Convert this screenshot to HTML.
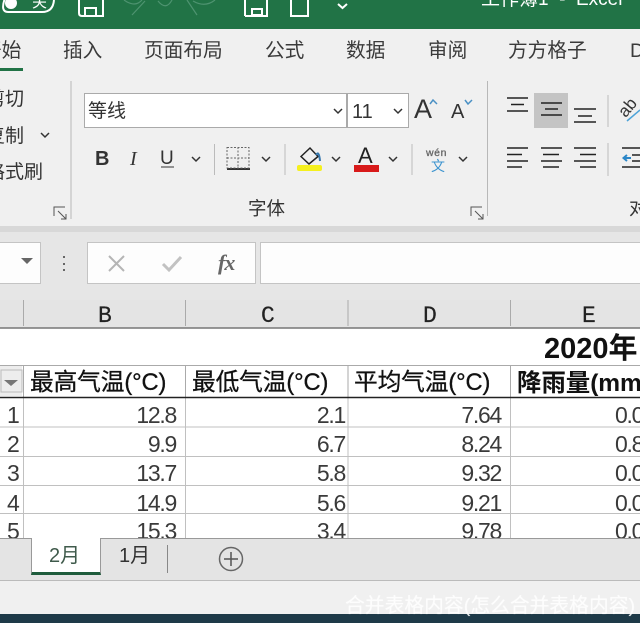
<!DOCTYPE html>
<html lang="zh"><head><meta charset="utf-8"><title>Excel</title>
<style>
html,body{margin:0;padding:0;background:#f0f0f0}
#p{position:relative;width:640px;height:623px;overflow:hidden;background:#f0f0f0;font-family:"Liberation Sans","Noto Sans CJK SC",sans-serif;color:#333;filter:blur(.3px)}
.r{position:absolute}
.t{position:absolute;white-space:nowrap;line-height:1}
.tab{font-size:19.7px;color:#3a3a3a;top:42px}
.c{font-size:23px;color:#3a3a3a;letter-spacing:-1.3px;text-align:right;width:120px}
.e{font-size:23px;color:#3a3a3a;letter-spacing:-1.3px;left:615px}
.h{font-size:23.7px;color:#111;top:372px;letter-spacing:-.1px;-webkit-text-stroke:.3px #111}
.col{font-family:"Liberation Mono","Liberation Serif",monospace;font-size:23px;color:#222;top:305px;-webkit-text-stroke:.2px #222}
.n{font-size:23px;color:#3a3a3a;left:7px}
svg{position:absolute;left:0;top:0}
</style></head><body><div id="p">
<div class="r" style="left:0;top:0;width:640px;height:29px;background:#217346"></div>
<div class="r" style="left:0;top:226px;width:640px;height:6px;background:#d8d8d8"></div>
<div class="r" style="left:0;top:232px;width:640px;height:68px;background:#e6e6e6"></div>
<div class="r" style="left:0;top:300px;width:640px;height:28px;background:#e4e4e4"></div>
<div class="r" style="left:0;top:328px;width:640px;height:210px;background:#fff"></div>
<div class="r" style="left:0;top:581px;width:640px;height:33px;background:#f0f0f0"></div>
<div class="r" style="left:0;top:614px;width:640px;height:9px;background:#1e3a48"></div>
<div class="t" style="left:481px;top:-10px;font-size:19px;color:#fff">工作簿1&nbsp; -&nbsp; Excel</div>
<div class="t" style="left:32px;top:-5px;font-size:15px;color:#fff">关</div>
<div class="t tab" style="left:-18px">开始</div><div class="r" style="left:0;top:68px;width:23px;height:3px;background:#217346"></div>
<div class="t tab" style="left:63px">插入</div><div class="t tab" style="left:144px">页面布局</div>
<div class="t tab" style="left:265px">公式</div><div class="t tab" style="left:346px">数据</div>
<div class="t tab" style="left:428px">审阅</div><div class="t tab" style="left:508px">方方格子</div>
<div class="t tab" style="left:630px">D</div>
<div class="t" style="left:-14px;top:90px;font-size:19px">剪切</div>
<div class="t" style="left:-14px;top:127px;font-size:19px">复制</div>
<div class="t" style="left:-14px;top:163px;font-size:19px">格式刷</div>
<div class="r" style="left:84px;top:93px;width:263px;height:35px;background:#fff;border:1px solid #aaa;box-sizing:border-box"></div>
<div class="r" style="left:347px;top:93px;width:62px;height:35px;background:#fff;border:1px solid #aaa;box-sizing:border-box"></div>
<div class="t" style="left:88px;top:102px;font-size:19px">等线</div>
<div class="t" style="left:352px;top:102px;font-size:20px">11</div>
<div class="t" style="left:414px;top:96px;font-size:27px;font-weight:300">A</div>
<div class="t" style="left:451px;top:102px;font-size:20px">A</div>
<div class="t" style="left:95px;top:149px;font-size:20px;font-weight:bold">B</div>
<div class="t" style="left:130px;top:149px;font-size:20px;font-family:'Liberation Serif',serif;font-style:italic">I</div>
<div class="t" style="left:160px;top:149px;font-size:19px">U</div>
<div class="t" style="left:358px;top:145px;font-size:22px;color:#222">A</div>
<div class="t" style="left:426px;top:148px;font-size:10.5px;color:#666;letter-spacing:.6px;-webkit-text-stroke:.3px #666">wén</div>
<div class="t" style="left:431px;top:159px;font-size:14px;color:#3d94cf">文</div>
<div class="t" style="left:248px;top:200px;font-size:18.5px">字体</div>
<div class="t" style="left:629px;top:200px;font-size:18.5px">对齐</div>
<div class="t" style="left:619px;top:98px;font-size:17px;color:#333;transform:rotate(-50deg);transform-origin:10px 10px">ab</div>
<div class="r" style="left:297px;top:165px;width:25px;height:6px;background:#f5f01e;border-radius:2px"></div>
<div class="r" style="left:354px;top:165px;width:25px;height:7px;background:#d81a1a"></div>
<div class="r" style="left:534px;top:93px;width:34px;height:35px;background:#c4c4c4"></div>
<div class="r" style="left:0;top:242px;width:41px;height:42px;background:#fdfdfd;border:1px solid #c4c4c4;border-left:0;box-sizing:border-box"></div>
<div class="r" style="left:87px;top:242px;width:169px;height:42px;background:#fdfdfd;border:1px solid #c4c4c4;box-sizing:border-box"></div>
<div class="r" style="left:260px;top:242px;width:380px;height:42px;background:#fdfdfd;border:1px solid #c4c4c4;border-right:0;box-sizing:border-box"></div>
<div class="t" style="left:218px;top:252px;font-size:22px;font-family:'Liberation Serif',serif;font-style:italic;font-weight:bold;color:#666;letter-spacing:-1px">fx</div>
<div class="t col" style="left:98px">B</div><div class="t col" style="left:261px">C</div><div class="t col" style="left:423px">D</div><div class="t col" style="left:582px">E</div>
<div class="t" style="left:544px;top:335px;font-size:29px;font-weight:bold;color:#111">2020年</div>
<div class="r" style="left:0;top:366px;width:22px;height:30px;background:#ededed"></div>
<div class="t h" style="left:30px">最高气温(°C)</div><div class="t h" style="left:192px">最低气温(°C)</div>
<div class="t h" style="left:354px">平均气温(°C)</div><div class="t h" style="left:517px;font-weight:bold;font-size:24.5px;-webkit-text-stroke:0">降雨量(mm)</div>
<div class="t n" style="top:404px">1</div><div class="t n" style="top:433px">2</div><div class="t n" style="top:462px">3</div><div class="t n" style="top:492px">4</div><div class="t n" style="top:520px">5</div>
<div class="t c" style="left:56px;top:404px">12.8</div><div class="t c" style="left:56px;top:433px">9.9</div><div class="t c" style="left:56px;top:462px">13.7</div><div class="t c" style="left:56px;top:492px">14.9</div><div class="t c" style="left:56px;top:520px">15.3</div>
<div class="t c" style="left:225px;top:404px">2.1</div><div class="t c" style="left:225px;top:433px">6.7</div><div class="t c" style="left:225px;top:462px">5.8</div><div class="t c" style="left:225px;top:492px">5.6</div><div class="t c" style="left:225px;top:520px">3.4</div>
<div class="t c" style="left:381px;top:404px">7.64</div><div class="t c" style="left:381px;top:433px">8.24</div><div class="t c" style="left:381px;top:462px">9.32</div><div class="t c" style="left:381px;top:492px">9.21</div><div class="t c" style="left:381px;top:520px">9.78</div>
<div class="t e" style="top:404px">0.0</div><div class="t e" style="top:433px">0.8</div><div class="t e" style="top:462px">0.0</div><div class="t e" style="top:492px">0.0</div><div class="t e" style="top:520px">0.0</div>
<div class="r" style="left:0;top:538px;width:640px;height:43px;background:#e4e4e4;border-top:1px solid #999;border-bottom:1px solid #bbb;box-sizing:border-box"></div>
<div class="r" style="left:31px;top:538px;width:70px;height:37px;background:#fff;border:1px solid #999;border-top:0;border-bottom:3px solid #1e5c3c;box-sizing:border-box"></div>
<div class="t" style="left:49px;top:546px;font-size:20px;color:#3f5a4b">2月</div>
<div class="t" style="left:119px;top:546px;font-size:20px;color:#333">1月</div>
<svg width="640" height="623" fill="none">
<g stroke="#fff" stroke-width="2">
<path d="M5 -2Q0 12 8 12H42Q53 12 54 0"/><circle cx="11" cy="3" r="6" fill="#fff" stroke="none"/>
<path d="M79 0V13Q79 16 82 16H103V0M85 16V8H96V16"/><path d="M245 16V0M267 0V16H245M252 9H262V15H252Z"/><path d="M291 0V16H308V0"/>
<path d="M338 4L342.500 8L347 4"/></g>
<g stroke="#4e9370" stroke-width="1.200"><path d="M132 15L145 1M124 0Q135 8 142 0M158 1Q166 11 172 0M187 0L197 15M193 1Q205 8 215 0"/></g>
<g stroke="#b8b8b8"><path d="M71 81V219M487.500 81V216"/></g>
<g stroke="#333" stroke-width="1.500"><path d="M334 109L338 113L342 109M394 109L398 113L402 109M41 133L45 137L49 133M192 157L196 161L200 157M262 157L266 161L270 157M332 157L336 161L340 157M389 157L393 161L397 157M459 157L463 161L467 157"/>
<path d="M161 167H174" stroke-width="1"/><path d="M227 169H250" stroke-width="2"/><path d="M227 147.500H249V168H227ZM238 147V168M227 158H249" stroke="#666" stroke-width="1" stroke-dasharray="2 1.500"/>
<path d="M301 156.500L310 148L318 156.500L309 164Z" stroke="#222"/><path d="M316 155Q319 150 320 161" stroke="#3476ad" stroke-width="2"/>
<path d="M507 98H528M511 104.500H524M507 111H528M541 103H562M545 109H558M541 115H562M574 109H596M578 116H592M574 122H596" stroke="#222"/>
<path d="M507 148H528M507 154.500H522M507 161H528M507 167H522M541 148H562M543 154.500H559M541 161H562M543 167H559M574 148H596M580 154.500H596M574 161H596M580 167H596" stroke="#222"/>
<path d="M622 148H640M632 155H640M632 161H640M622 167H640" stroke="#222"/>
</g>
<path d="M623 158H631M627 155L623.500 158L627 161" stroke="#2b87c8" stroke-width="2"/>
<path d="M627 121L640 110" stroke="#4da3d8" stroke-width="1.500"/>
<path d="M430 104L433 100L437 104" stroke="#4a90c4" stroke-width="1.500"/><path d="M465 100L468 104L472 100" stroke="#4a90c4" stroke-width="1.500"/>
<g stroke="#bbb"><path d="M214.500 144V175M285 144V175M412 144V175M608 95V127M608 143V176"/></g>
<g stroke="#555" stroke-width="1"><path d="M54 216V207H65M58 211L66 219M61 219H66V214M471 216V207H482M475 211L483 219M478 219H483V214"/></g>
<path d="M21 258H33L27 264Z" fill="#666"/><path d="M4 380H18L11 386Z" fill="#777"/>
<rect x="1" y="370" width="21" height="22" stroke="#bbb"/>
<g fill="#666"><rect x="63" y="256" width="2" height="2"/><rect x="63" y="263" width="2" height="2"/><rect x="63" y="269" width="2" height="2"/></g>
<path d="M109 256L124 271M124 256L109 271" stroke="#b5b5b5" stroke-width="2"/>
<path d="M163 264L169 270L181 257" stroke="#c2c2c2" stroke-width="3"/>
<g stroke="#c0c0c0"><path d="M0 427H640M0 456.500H640M0 485.500H640M0 513.500H640M23.500 398V538M185.500 398V538M348 398V538M510.500 398V538"/></g>
<g stroke="#aaa"><path d="M23.500 300V326M185.500 300V326M348 300V326M510.500 300V326"/><path d="M0 365.500H640M23.500 366V397M185.500 366V397M348 366V397M510.500 366V397"/></g>
<path d="M0 328H640" stroke="#777" stroke-width="1.500"/><path d="M0 397.500H640" stroke="#222" stroke-width="1.500"/>
<path d="M167.500 545V573" stroke="#888"/><circle cx="231" cy="559" r="11.500" stroke="#666" stroke-width="1.500"/><path d="M224 559H238M231 552V566" stroke="#555" stroke-width="1.500"/>
</svg>
<div class="t" style="left:345px;top:597px;font-size:19.8px;color:#fff;text-shadow:0 0 1px rgba(255,255,255,.5);opacity:.9">合并表格内容(怎么合并表格内容)</div>
</div></body></html>
